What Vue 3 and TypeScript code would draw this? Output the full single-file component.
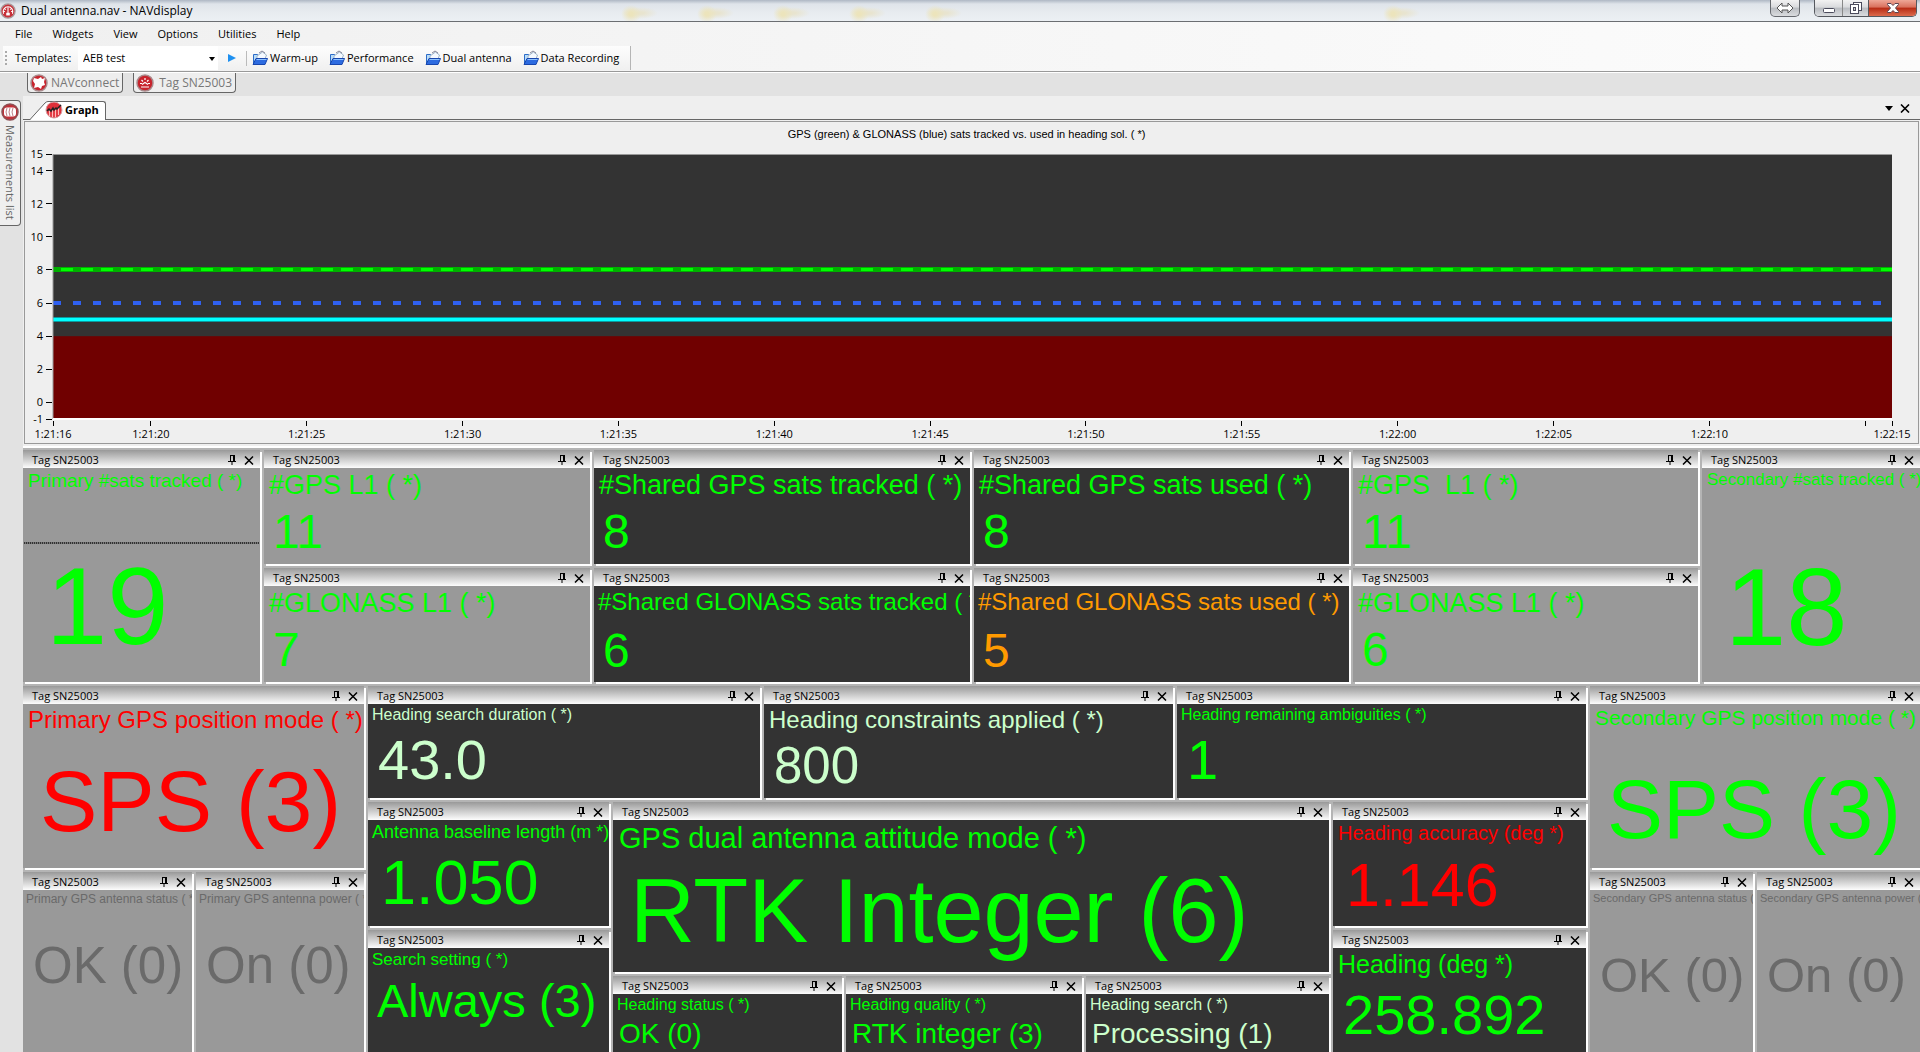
<script setup lang="ts">
import { ref } from 'vue'

interface Widget {
  title: string
  value: string
  size: string
  tone: 'green' | 'red' | 'amber' | 'pale' | 'dim'
  light?: boolean
  ruled?: boolean
  area: string
}

interface Group {
  name: string
  widgets: Widget[]
}

const menus: string[] = ['File', 'Widgets', 'View', 'Options', 'Utilities', 'Help']
const shortcuts: string[] = ['Warm-up', 'Performance', 'Dual antenna', 'Data Recording']
const templates: string[] = ['AEB test', ...shortcuts]
const template = ref<string>('AEB test')

const satellites: Group = {
  name: 'satellites',
  widgets: [
    { title: 'Primary #sats tracked ( *)', value: '19', size: 'count-a', tone: 'green', light: true, ruled: true, area: 'a' },
    { title: '#GPS L1 ( *)', value: '11', size: 'sats', tone: 'green', light: true, area: 'b' },
    { title: '#Shared GPS sats tracked ( *)', value: '8', size: 'sats', tone: 'green', area: 'c' },
    { title: '#Shared GPS sats used ( *)', value: '8', size: 'sats', tone: 'green', area: 'd' },
    { title: '#GPS  L1 ( *)', value: '11', size: 'sats', tone: 'green', light: true, area: 'e' },
    { title: 'Secondary #sats tracked ( *)', value: '18', size: 'count-b', tone: 'green', light: true, area: 'f' },
    { title: '#GLONASS L1 ( *)', value: '7', size: 'sats', tone: 'green', light: true, area: 'g' },
    { title: '#Shared GLONASS sats tracked ( *)', value: '6', size: 'sats-long', tone: 'green', area: 'h' },
    { title: '#Shared GLONASS sats used ( *)', value: '5', size: 'sats-long', tone: 'amber', area: 'i' },
    { title: '#GLONASS L1 ( *)', value: '6', size: 'sats', tone: 'green', light: true, area: 'j' },
  ],
}

const groups: Group[] = [
  {
    name: 'primary',
    widgets: [
      { title: 'Primary GPS position mode ( *)', value: 'SPS (3)', size: 'mode-a', tone: 'red', light: true, area: 'a' },
      { title: 'Primary GPS antenna status ( *)', value: 'OK (0)', size: 'power-a', tone: 'dim', light: true, area: 'b' },
      { title: 'Primary GPS antenna power ( *)', value: 'On (0)', size: 'power-a', tone: 'dim', light: true, area: 'c' },
    ],
  },
  {
    name: 'search',
    widgets: [
      { title: 'Heading search duration ( *)', value: '43.0', size: 'duration', tone: 'pale', area: 'a' },
      { title: 'Heading constraints applied ( *)', value: '800', size: 'constraint', tone: 'pale', area: 'b' },
      { title: 'Heading remaining ambiguities ( *)', value: '1', size: 'duration', tone: 'green', area: 'c' },
    ],
  },
  {
    name: 'baseline',
    widgets: [
      { title: 'Antenna baseline length (m *)', value: '1.050', size: 'length', tone: 'green', area: 'a' },
      { title: 'Search setting ( *)', value: 'Always (3)', size: 'setting', tone: 'green', area: 'b' },
    ],
  },
  {
    name: 'attitude',
    widgets: [
      { title: 'GPS dual antenna attitude mode ( *)', value: 'RTK Integer (6)', size: 'attitude', tone: 'green', area: 'a' },
      { title: 'Heading status ( *)', value: 'OK (0)', size: 'small', tone: 'green', area: 'b' },
      { title: 'Heading quality ( *)', value: 'RTK integer (3)', size: 'small', tone: 'green', area: 'c' },
      { title: 'Heading search ( *)', value: 'Processing (1)', size: 'small', tone: 'pale', area: 'd' },
    ],
  },
  {
    name: 'heading',
    widgets: [
      { title: 'Heading accuracy (deg *)', value: '1.146', size: 'accuracy', tone: 'red', area: 'a' },
      { title: 'Heading (deg *)', value: '258.892', size: 'heading-value', tone: 'green', area: 'b' },
    ],
  },
  {
    name: 'secondary',
    widgets: [
      { title: 'Secondary GPS position mode ( *)', value: 'SPS (3)', size: 'mode-b', tone: 'green', light: true, area: 'a' },
      { title: 'Secondary GPS antenna status ( *)', value: 'OK (0)', size: 'power-b', tone: 'dim', light: true, area: 'b' },
      { title: 'Secondary GPS antenna power ( *)', value: 'On (0)', size: 'power-b', tone: 'dim', light: true, area: 'c' },
    ],
  },
]

const allGroups: Group[] = [satellites, ...groups]

const yMax = 15
const yMin = -1
const yTicks: number[] = [15, 14, 12, 10, 8, 6, 4, 2, 0, -1]
const yPos = (v: number): string => `${((yMax - v) / (yMax - yMin)) * 100}%`

// The visible window runs from 1:21:16.9 to 1:22:15.9.
const windowStart = 16.86
const windowLength = 59
const xPos = (second: number): string => `${((second - windowStart) / windowLength) * 100}%`
const clock = (second: number): string =>
  second < 60 ? `1:21:${second}` : `1:22:${String(second - 60).padStart(2, '0')}`
const xTicks = [20, 25, 30, 35, 40, 45, 50, 55, 60, 65, 70].map((s) => ({ x: xPos(s), text: clock(s) }))
</script>

<template>
  <div class="app">
    <header class="titlebar">
      <svg class="badge" viewBox="0 0 18 18" aria-hidden="true">
        <circle cx="9" cy="9" r="8" fill="#c8313a" stroke="#a9999b" stroke-width="1.500" />
        <path d="M4 12a5.500 5.500 0 1 1 10 0M9 12V5M5 6l1.500 1.500M13 6l-1.500 1.500M3.500 9.500h2M12.500 9.500h2" fill="none" stroke="#fff" stroke-width="1.200" />
        <rect x="7" y="11" width="4" height="3" fill="#fff" />
      </svg>
      <h1>Dual antenna.nav - NAVdisplay</h1>
      <div class="window-buttons">
        <button class="wb swap" aria-label="Switch display">
          <svg width="18" height="12" viewBox="0 0 18 12"><path d="M1 6l5-5v3h6V1l5 5-5 5V8H6v3z" fill="#fff" stroke="#555" /></svg>
        </button>
        <div class="wb-group">
          <button class="wb min" aria-label="Minimize">
            <svg width="14" height="12" viewBox="0 0 14 12"><rect x="1.500" y="6.500" width="11" height="4" rx="1" fill="#fff" stroke="#4b4b5c" /></svg>
          </button>
          <button class="wb max" aria-label="Restore">
            <svg width="14" height="14" viewBox="0 0 14 14">
              <rect x="4.500" y="1.500" width="8" height="8" fill="#fff" stroke="#4b4b5c" />
              <rect x="1.500" y="3.500" width="8" height="9" fill="#fff" stroke="#4b4b5c" />
              <rect x="4.500" y="6.500" width="2" height="3" fill="#ccc" stroke="#4b4b5c" />
            </svg>
          </button>
          <button class="wb close" aria-label="Close">
            <svg width="14" height="12" viewBox="0 0 14 12"><path d="M1.500 1.500h3.500l2 2 2-2h3.500v1L9.500 6l3 3.500v1H9l-2-2-2 2H1.500v-1l3-3.500-3-3.500z" fill="#fff" stroke="#5c4450" /></svg>
          </button>
        </div>
      </div>
    </header>

    <nav class="menubar">
      <button v-for="m in menus" :key="m">{{ m }}</button>
    </nav>

    <div class="toolrow">
      <div class="toolbar">
        <span class="grip"></span>
        <label for="template">Templates:</label>
        <div class="combo">
          <select id="template" v-model="template">
            <option v-for="t in templates" :key="t">{{ t }}</option>
          </select>
          <svg class="caret" width="6" height="4" viewBox="0 0 6 4" aria-hidden="true"><path d="M0 0h6L3 4z" /></svg>
        </div>
        <button class="play" aria-label="Load template">
          <svg width="8" height="8" viewBox="0 0 8 8"><path d="M0 0l8 4-8 4z" fill="#1e90f0" /></svg>
        </button>
        <span class="divider"></span>
        <button v-for="s in shortcuts" :key="s" class="shortcut">
          <svg width="16" height="16" viewBox="0 0 16 16" aria-hidden="true">
            <path d="M1.500 14V4.500h4l1 1.500h4v8z" fill="#b9dcf8" stroke="#2c6cc8" />
            <path d="M5 6l5.500-4 4 3-1.500 4H5z" fill="#f4f9ff" stroke="#9db4c8" />
            <path d="M7 3l3-2 3 2" fill="none" stroke="#889" />
            <path d="M1 14.500L4 8.500h11.500L13 14.500z" fill="#2d6be0" stroke="#1746ae" />
            <path d="M4.500 9.500h10" stroke="#8fc4ff" />
          </svg>
          <span>{{ s }}</span>
        </button>
      </div>
    </div>

    <div class="device-tabs">
      <button>
        <svg class="badge" viewBox="0 0 18 18" aria-hidden="true">
          <circle cx="9" cy="9" r="8" fill="#c8232c" stroke="#a9898b" stroke-width="1.500" />
          <path d="M4 4l4 1 3-2 1 2 3-1-1 4 1 3-3 1-1 3-3-2-4 1 1-4-2-3z" fill="#fff" />
        </svg>
        <span>NAVconnect</span>
      </button>
      <button>
        <svg class="badge" viewBox="0 0 18 18" aria-hidden="true">
          <circle cx="9" cy="9" r="8" fill="#c8232c" stroke="#a9898b" stroke-width="1.500" />
          <path d="M4 9.500h2M12 9.500h2M9 4v2M5.500 6l1.500 1.500M12.500 6L11 7.500M6 10.500l3-2 3 2M5 13h8" fill="none" stroke="#fff" stroke-width="1.200" />
        </svg>
        <span class="wide">Tag SN25003</span>
      </button>
    </div>

    <div class="workspace">
      <aside>
        <button class="side-tab">
          <svg class="badge" viewBox="0 0 18 18" aria-hidden="true">
            <circle cx="9" cy="9" r="8" fill="#c03038" stroke="#8d5054" stroke-width="1.500" />
            <rect x="3" y="4.500" width="12" height="9" rx="3" fill="#fff" />
            <path d="M6 5q-2 4 0 8M9 5q-2 4 0 8M12 5q-2 4 0 8" fill="none" stroke="#c08088" />
          </svg>
          <span>Measurements list</span>
        </button>
      </aside>

      <main>
        <div class="doc-tabs">
          <svg class="slant" width="18" height="19" viewBox="0 0 18 19" aria-hidden="true">
            <path d="M0 19L16 1.500l2-1V19z" fill="#fff" />
            <path d="M0 18.500L15 2q1.500-1.500 3-1.500" fill="none" stroke="#666" />
          </svg>
          <button class="doc-tab">
            <svg class="badge" viewBox="0 0 18 18" aria-hidden="true">
              <circle cx="9" cy="9" r="8" fill="#e0303a" stroke="#d8a0a4" />
              <path d="M4.500 15V9M7.500 16V9M10.500 16V8M13.500 14V7" stroke="#fbb" stroke-width="1.200" />
              <path d="M2 10l2-2 2 2 2-3 1 2 2-2 1 1 4-4" fill="none" stroke="#222" stroke-width="1.500" />
            </svg>
            <span>Graph</span>
          </button>
          <div class="doc-actions">
            <button aria-label="Window list"><svg width="8" height="5" viewBox="0 0 8 5"><path d="M0 0h8L4 5z" /></svg></button>
            <button aria-label="Close document"><svg width="10" height="9" viewBox="0 0 10 9"><path d="M1 0.500l8 8M9 0.500l-8 8" stroke="#000" stroke-width="1.600" /></svg></button>
          </div>
        </div>

        <figure class="chart">
          <figcaption>GPS (green) &amp; GLONASS (blue) sats tracked vs. used in heading sol. ( *)</figcaption>
          <svg class="plot" role="img" aria-label="Satellites over time">
            <rect width="100%" height="100%" fill="#333" />
            <rect width="100%" :y="yPos(4)" height="31.250%" fill="#700000" />
            <line x1="0" x2="100%" :y1="yPos(8)" :y2="yPos(8)" stroke="#00b000" stroke-width="5" />
            <line x1="0" x2="100%" :y1="yPos(8)" :y2="yPos(8)" stroke="#00ff00" stroke-width="3" stroke-dasharray="12 8" stroke-dashoffset="12" />
            <line x1="0" x2="100%" :y1="yPos(6)" :y2="yPos(6)" stroke="#2f60f0" stroke-width="4" stroke-dasharray="8 12" />
            <line x1="0" x2="100%" :y1="yPos(5)" :y2="yPos(5)" stroke="#0b9a9e" stroke-width="5" />
            <line x1="0" x2="100%" :y1="yPos(5)" :y2="yPos(5)" stroke="#00ffff" stroke-width="3" />
            <path d="M0 0V265" stroke="#999" />
            <line x1="0" x2="100%" y1="0" y2="0" stroke="#999" />
            <line x1="0" x2="100%" y1="100%" y2="100%" stroke="#fff" stroke-width="2" />
            <g v-for="v in yTicks" :key="v">
              <line x1="-7" x2="-1" :y1="yPos(v)" :y2="yPos(v)" stroke="#000" />
              <text x="-10" :y="yPos(v)" dy="4" text-anchor="end">{{ v }}</text>
            </g>
            <g v-for="t in xTicks" :key="t.text">
              <line :x1="t.x" :x2="t.x" y1="267" y2="272" stroke="#000" />
              <text :x="t.x" y="284" text-anchor="middle">{{ t.text }}</text>
            </g>
            <line :x1="xPos(75)" :x2="xPos(75)" y1="267" y2="272" stroke="#000" />
            <line x1="0" x2="0" y1="267" y2="272" stroke="#000" />
            <text x="0" y="284" text-anchor="middle">1:21:16</text>
            <line x1="100%" x2="100%" y1="267" y2="272" stroke="#000" />
            <text x="100%" y="284" text-anchor="middle">1:22:15</text>
          </svg>
        </figure>

        <div class="dock">
          <div v-for="g in allGroups" :key="g.name" class="group" :class="'g-' + g.name">
            <section
              v-for="w in g.widgets"
              :key="w.area"
              class="widget"
              :class="['area-' + w.area, w.size, { light: w.light }]"
            >
              <header>
                <span>Tag SN25003</span>
                <button aria-label="Pin"><svg width="8" height="10" viewBox="0 0 8 10"><path d="M2 0.500h4M2.500 0v6M5.500 0v6M6.500 0v6M0 6.500h8M4 6v4" fill="none" stroke="#000" /></svg></button>
                <button aria-label="Close"><svg width="10" height="9" viewBox="0 0 10 9"><path d="M1 0.500l8 8M9 0.500l-8 8" stroke="#000" stroke-width="1.500" /></svg></button>
              </header>
              <div class="body" :class="'tone-' + w.tone">
                <h2>{{ w.title }}</h2>
                <p>{{ w.value }}</p>
                <i v-if="w.ruled" class="rule"></i>
              </div>
            </section>
          </div>
        </div>
      </main>
    </div>
  </div>
</template>

<style>
body {
  margin: 0;
  background: #e2e2e2;
}
</style>

<style scoped>
.app {
  display: flex;
  flex-direction: column;
  min-height: 100vh;
  overflow: hidden;
  font: 11px/16px 'Open Sans', 'Noto Sans', sans-serif;
  color: #000;
}
button {
  display: flex;
  align-items: center;
  margin: 0;
  padding: 0;
  border: 0;
  background: none;
  font: inherit;
  color: inherit;
  white-space: nowrap;
}
svg {
  display: block;
  flex: none;
}
.badge {
  width: 18px;
  height: 18px;
}

.titlebar {
  display: flex;
  height: 21px;
  border-bottom: 1px solid #6b6e72;
  background:
    radial-gradient(ellipse 10px 9px at 631px 14px, #ece4bc 20%, transparent),
    radial-gradient(ellipse 18px 6px at 640px 13px, #e8e4cf 20%, transparent),
    radial-gradient(ellipse 10px 9px at 707px 14px, #ece4bc 20%, transparent),
    radial-gradient(ellipse 18px 6px at 716px 13px, #e8e4cf 20%, transparent),
    radial-gradient(ellipse 10px 9px at 783px 14px, #ece4bc 20%, transparent),
    radial-gradient(ellipse 18px 6px at 792px 13px, #e8e4cf 20%, transparent),
    radial-gradient(ellipse 10px 9px at 859px 14px, #ece4bc 20%, transparent),
    radial-gradient(ellipse 18px 6px at 868px 13px, #e8e4cf 20%, transparent),
    radial-gradient(ellipse 10px 9px at 935px 14px, #ece4bc 20%, transparent),
    radial-gradient(ellipse 18px 6px at 944px 13px, #e8e4cf 20%, transparent),
    radial-gradient(ellipse 10px 9px at 1393px 14px, #ece4bc 20%, transparent),
    radial-gradient(ellipse 18px 6px at 1402px 13px, #e8e4cf 20%, transparent),
    linear-gradient(#aeb7c4, #dfe4ea 4px, #e7ebef 12px, #ecf0f4);
}
.titlebar .badge {
  width: 16px;
  height: 16px;
  margin-top: 3px;
}
h1 {
  flex: 1;
  margin: 3px 0 0 5px;
  font-size: 12px;
  font-weight: 400;
  line-height: 16px;
}
.window-buttons {
  display: flex;
  align-items: flex-start;
  gap: 14px;
  margin-right: 3px;
}
.wb-group {
  display: flex;
  border: 1px solid #55585e;
  border-top: 0;
  border-radius: 0 0 5px 5px;
  overflow: hidden;
}
.wb {
  justify-content: center;
  height: 16px;
  background: linear-gradient(#f2f2f2, #d9dadd 45%, #b9bcc1 50%, #dadcdf);
}
.wb.swap {
  width: 30px;
  height: 17px;
  border: 1px solid #66696f;
  border-top: 0;
  border-radius: 0 0 5px 5px;
}
.wb.min {
  width: 28px;
  border-right: 1px solid #888;
}
.wb.max {
  width: 26px;
  border-right: 1px solid #55585e;
}
.wb.close {
  width: 47px;
  background: linear-gradient(#eea797, #d9705c 45%, #b72b14 50%, #dc6a4c);
}

.menubar {
  display: flex;
  gap: 20px;
  height: 24px;
  padding-left: 15px;
  background: linear-gradient(90deg, #f0f0f0, #fcfcfc);
}
.toolrow {
  height: 25px;
  padding-left: 3px;
  border-bottom: 1px solid #999;
  background: linear-gradient(90deg, #f0f0f0, #fcfcfc);
}
.toolbar {
  display: inline-flex;
  align-items: center;
  height: 24px;
  padding-right: 11px;
  border-right: 1px solid #b5b5b5;
  background: linear-gradient(#fdfdfd, #f0f0f0);
}
.grip {
  width: 2px;
  height: 15px;
  margin: 0 8px 0 2px;
  background: repeating-linear-gradient(#aaa 0 2px, transparent 2px 4px);
}
.toolbar label {
  width: 63px;
}
.combo {
  position: relative;
  width: 140px;
  height: 24px;
}
.combo select {
  width: 100%;
  height: 100%;
  padding: 0 5px;
  border: 0;
  background: #fff;
  font: inherit;
  appearance: none;
}
.caret {
  position: absolute;
  right: 3px;
  top: 11px;
}
.play {
  margin: 0 10px;
}
.divider {
  width: 1px;
  height: 15px;
  background: #bbb;
}
.shortcut {
  gap: 2px;
  margin-left: 5px;
}
.shortcut + .shortcut {
  margin-left: 11px;
}

.device-tabs {
  display: flex;
  gap: 10px;
  height: 23px;
  padding-left: 27px;
  border-top: 1px solid #fff;
  background: #e2e2e2;
  color: #777;
  font-size: 12px;
}
.device-tabs button {
  gap: 3px;
  height: 20px;
  padding: 0 3px 0 2px;
  border: 1px solid #666;
  border-top: 0;
  border-radius: 0 0 4px 4px;
  background: #eee;
}
.device-tabs .wide {
  padding-left: 2px;
}

.workspace {
  display: flex;
  flex: 1;
}
aside {
  width: 23px;
  flex: none;
  background: #e2e2e2;
}
.side-tab {
  flex-direction: column;
  gap: 4px;
  width: 21px;
  height: 126px;
  margin-top: 4px;
  padding-top: 2px;
  border: 1px solid #666;
  border-left: 0;
  border-radius: 0 4px 4px 0;
  background: #efefef;
  color: #666;
}
.side-tab span {
  writing-mode: vertical-rl;
}

main {
  display: flex;
  flex-direction: column;
  flex: 1;
  min-width: 0;
  background: #efefef;
}
.doc-tabs {
  display: flex;
  align-items: flex-end;
  height: 23px;
  padding-left: 7px;
  border-bottom: 1px solid #666;
}
.doc-tab {
  gap: 2px;
  height: 19px;
  margin-bottom: -1px;
  padding: 0 6px 2px 0;
  border: 1px solid #666;
  border-width: 1px 1px 0 0;
  border-radius: 0 3px 0 0;
  background: #fff;
  font-weight: 700;
}
.doc-tab .badge {
  margin-left: -3px;
}
.slant {
  margin-bottom: -1px;
}
.doc-actions {
  display: flex;
  gap: 7px;
  margin: 0 10px 6px auto;
}
.chart {
  margin: 1px 1px 2px;
  padding: 5px 26px 24px 28px;
  border: 1px solid #999;
}
figcaption {
  height: 27px;
  margin-left: -12px;
  font: 11px/14px 'Liberation Sans', Arial, sans-serif;
  text-align: center;
}
.plot {
  width: 100%;
  height: 265px;
  overflow: visible;
}
.plot line {
  shape-rendering: crispEdges;
}

.dock {
  display: grid;
  flex: 1;
  grid-template-columns: minmax(0, 341fr) minmax(0, 241fr) minmax(0, 716fr) minmax(0, 253fr) minmax(0, 330fr);
  grid-template-rows: 232px 112px minmax(250px, 1fr);
  grid-template-areas:
    'sats sats sats sats sats'
    'pri search search search sec'
    'pri base att head sec';
  gap: 4px;
  padding-top: 4px;
  background: linear-gradient(#fff 2px, #b4b4b4 2px);
}
.group {
  display: grid;
  gap: 4px;
}
.g-satellites {
  grid-area: sats;
  grid-template-columns:
    minmax(0, 237fr) minmax(0, 326fr) minmax(0, 376fr) minmax(0, 375fr) minmax(0, 345fr)
    minmax(0, 218fr);
  grid-template-rows: 1fr 1fr;
  grid-template-areas: 'a b c d e f' 'a g h i j f';
}
.g-primary {
  grid-area: pri;
  grid-template-columns: minmax(0, 169fr) minmax(0, 168fr);
  grid-template-rows: 182px 1fr;
  grid-template-areas: 'a a' 'b c';
}
.g-secondary {
  grid-area: sec;
  grid-template-columns: minmax(0, 1fr) minmax(0, 1fr);
  grid-template-rows: 182px 1fr;
  grid-template-areas: 'a a' 'b c';
}
.g-search {
  grid-area: search;
  grid-template-columns: minmax(0, 392fr) minmax(0, 409fr) minmax(0, 409fr);
  grid-template-areas: 'a b c';
}
.g-baseline,
.g-heading {
  grid-template-columns: minmax(0, 1fr);
  grid-template-rows: 124px 1fr;
  grid-template-areas: 'a' 'b';
}
.g-baseline {
  grid-area: base;
}
.g-heading {
  grid-area: head;
}
.g-attitude {
  grid-area: att;
  grid-template-columns: minmax(0, 229fr) minmax(0, 236fr) minmax(0, 243fr);
  grid-template-rows: 170px 1fr;
  grid-template-areas: 'a a a' 'b c d';
}
.area-a { grid-area: a; }
.area-b { grid-area: b; }
.area-c { grid-area: c; }
.area-d { grid-area: d; }
.area-e { grid-area: e; }
.area-f { grid-area: f; }
.area-g { grid-area: g; }
.area-h { grid-area: h; }
.area-i { grid-area: i; }
.area-j { grid-area: j; }

.widget {
  display: flex;
  flex-direction: column;
  min-width: 0;
  min-height: 0;
  background: #333;
  box-shadow: 2px 2px 0 #fff;
}
.widget.light {
  background: #999;
}
.widget header {
  display: flex;
  align-items: center;
  flex: none;
  gap: 8px;
  box-sizing: border-box;
  height: 18px;
  padding: 2px 6px 0 9px;
  background: linear-gradient(#999, #fdfdfd);
}
.widget header span {
  flex: 1;
}
.body {
  position: relative;
  flex: 1;
  min-height: 0;
  padding-top: 2px;
  overflow: hidden;
  font-family: 'Liberation Sans', Arial, sans-serif;
  line-height: normal;
  white-space: pre;
}
h2,
.body p {
  margin: 0;
  font-weight: 400;
}
h2 {
  padding-left: 5px;
}
.body p {
  padding: 3px 0 0 9px;
}
.rule {
  position: absolute;
  left: 1px;
  right: 1px;
  top: 74px;
  height: 2px;
  background: repeating-linear-gradient(90deg, #333 0 1px, #777 1px 2px);
}
.tone-green { color: #0f0; }
.tone-red { color: #f00; }
.tone-amber { color: #ff9a00; }
.tone-pale { color: #cfc; }
.tone-dim { color: #6a6a6a; }

.sats h2 { font-size: 27px; }
.sats p { font-size: 48px; }
.sats-long h2 { padding-left: 4px; font-size: 24px; }
.sats-long p { padding-top: 7px; font-size: 48px; }
.count-a h2 { font-size: 19px; }
.count-a p { padding: 50px 0 0 23px; font-size: 110px; }
.count-b h2 { font-size: 17px; }
.count-b p { padding: 53px 0 0 23px; font-size: 110px; }
.mode-a h2 { font-size: 24px; }
.mode-a p { padding: 18px 0 0 17px; font-size: 86px; }
.mode-b h2 { font-size: 21px; }
.mode-b p { padding: 31px 0 0 17px; font-size: 84px; }
.power-a h2 { padding-left: 3px; font-size: 12px; }
.power-a p { padding: 30px 0 0 10px; font-size: 51px; }
.power-b h2 { padding-left: 3px; font-size: 11px; }
.power-b p { padding: 43px 0 0 10px; font-size: 49px; }
.duration h2 { padding-left: 4px; font-size: 16px; }
.duration p { padding-left: 10px; font-size: 56px; }
.constraint h2 { font-size: 24px; }
.constraint p { padding: 2px 0 0 10px; font-size: 51px; }
.length h2 { padding-left: 4px; font-size: 18px; }
.length p { padding-left: 13px; font-size: 63px; }
.setting h2 { padding-left: 4px; font-size: 17px; }
.setting p { font-size: 47px; }
.attitude h2 { padding-left: 6px; font-size: 29px; }
.attitude p { padding: 5px 0 0 17px; font-size: 90px; }
.small h2 { padding-left: 4px; font-size: 16px; }
.small p { padding: 4px 0 0 6px; font-size: 28px; }
.accuracy h2 { font-size: 20px; }
.accuracy p { padding: 5px 0 0 13px; font-size: 61px; }
.heading-value h2 { font-size: 25px; }
.heading-value p { padding-left: 10px; font-size: 56px; }
</style>
